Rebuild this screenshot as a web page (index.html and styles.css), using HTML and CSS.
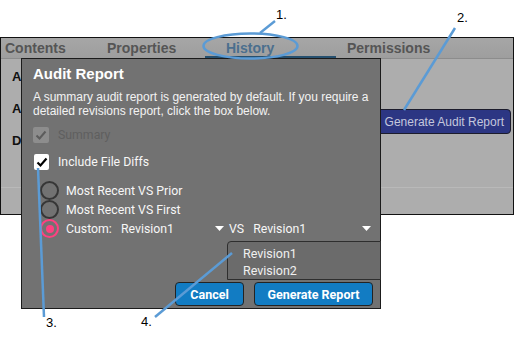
FILE: index.html
```html
<!DOCTYPE html>
<html lang="en">
<head>
    <meta charset="UTF-8">
    <title>Audit Report</title>
    <link rel="stylesheet" href="styles.css">
</head>
<body>
    <div class="panel">
        <div class="tabs">
            <span class="tab tab-contents">Contents</span>
            <span class="tab tab-properties">Properties</span>
            <span class="tab tab-history">History</span>
            <span class="tab tab-permissions">Permissions</span>
        </div>
        <div class="panel-body">
            <div class="panel-row">
                <div class="labels">
                    <div>A</div>
                    <div>A</div>
                    <div>D</div>
                </div>
                <button class="audit-btn">Generate Audit Report</button>
            </div>
            <div class="divider"></div>
        </div>
    </div>

    <div class="dialog">
        <h2 class="dialog-title">Audit Report</h2>
        <p class="dialog-text">A summary audit report is generated by default. If you require a detailed revisions report, click the box below.</p>

        <div class="check-row disabled">
            <span class="box box-disabled">
                <svg width="16" height="16" viewBox="0 0 16 16"><path d="M3.5 8.5 L6.5 11.5 L12.5 4.5" fill="none" stroke="#5c5c5c" stroke-width="2"/></svg>
            </span>
            <span>Summary</span>
        </div>
        <div class="check-row">
            <span class="box box-checked">
                <svg width="16" height="16" viewBox="0 0 16 16"><path d="M3.5 8.5 L6.5 11.5 L12.5 4.5" fill="none" stroke="#000" stroke-width="2.2"/></svg>
            </span>
            <span>Include File Diffs</span>
        </div>

        <div class="radio-row"><span class="radio"></span><span>Most Recent VS Prior</span></div>
        <div class="radio-row"><span class="radio"></span><span>Most Recent VS First</span></div>
        <div class="radio-row">
            <span class="radio radio-on"></span>
            <span class="custom-label">Custom:</span>
            <span class="select select-a">Revision1
                <svg class="caret" width="9" height="5" viewBox="0 0 9 5"><polygon points="0,0 9,0 4.5,5" fill="#fff"/></svg>
            </span>
            <span class="vs">VS</span>
            <span class="select select-b">Revision1
                <svg class="caret" width="9" height="5" viewBox="0 0 9 5"><polygon points="0,0 9,0 4.5,5" fill="#fff"/></svg>
            </span>
        </div>

        <ul class="menu">
            <li>Revision1</li>
            <li>Revision2</li>
        </ul>

        <div class="dialog-footer">
            <button class="btn btn-cancel">Cancel</button>
            <button class="btn btn-generate">Generate Report</button>
        </div>
    </div>

    <!-- callouts -->
    <svg class="callouts" width="514" height="343" viewBox="0 0 514 343">
        <ellipse cx="250.5" cy="46" rx="47" ry="12.5" fill="none" stroke="#5b9bd5" stroke-width="2.5"/>
        <line x1="275" y1="21" x2="260" y2="33" stroke="#5b9bd5" stroke-width="2.5"/>
        <line x1="455" y1="28" x2="404" y2="110" stroke="#5b9bd5" stroke-width="2.5"/>
        <line x1="38" y1="168" x2="44" y2="317" stroke="#5b9bd5" stroke-width="2.5"/>
        <line x1="232" y1="253" x2="155" y2="317" stroke="#5b9bd5" stroke-width="2.5"/>
    </svg>
    <span class="num num-1">1.</span>
    <span class="num num-2">2.</span>
    <span class="num num-3">3.</span>
    <span class="num num-4">4.</span>
</body>
</html>
```

FILE: styles.css
```css
body {
    margin: 0;
    width: 514px;
    height: 343px;
    position: relative;
    background: #fff;
    font-family: "Liberation Sans", Arial, sans-serif;
    overflow: hidden;
}

.panel {
    margin-top: 37px;
    width: 514px;
    height: 178px;
    box-sizing: border-box;
    border: 1px solid #111;
    background: #adadad;
}

.tabs {
    display: flex;
    height: 20px;
    line-height: 20px;
    border-bottom: 1px solid #8c8c8c;
    background: linear-gradient(#a6a6a6, #9e9e9e);
    font-size: 14px;
    font-weight: bold;
    color: #555;
}

.tab { display: block; box-sizing: border-box; }
.tab-contents { width: 106px; padding-left: 4px; }
.tab-properties { width: 98px; }
.tab-history {
    width: 131px;
    padding-left: 21px;
    color: #4b6f8e;
    box-shadow: inset 0 -2px 0 #26506f;
}
.tab-permissions { padding-left: 11px; }

.panel-body { padding-top: 2px; }

.panel-row {
    display: flex;
    justify-content: space-between;
    align-items: flex-start;
}

.labels {
    padding-left: 11px;
    font-size: 13px;
    font-weight: bold;
    line-height: 32px;
    color: #111;
}

.audit-btn {
    margin: 48px 2px 0 0;
    height: 25px;
    padding: 0 6px 0 10px;
    border: 1px solid #1c1c2c;
    border-radius: 4px;
    background: #2c3683;
    color: #c4c7dd;
    font-family: "Liberation Sans", Arial, sans-serif;
    font-size: 12px;
}

.divider {
    margin-top: 30px;
    border-top: 1px solid #b9b9b9;
}

/* dialog */
.dialog {
    position: absolute;
    left: 21px;
    top: 58px;
    width: 360px;
    height: 251px;
    box-sizing: border-box;
    padding: 6px 7px 2px 11px;
    border: 1px solid #1b1b1b;
    background: #727272;
    color: #fff;
    display: flex;
    flex-direction: column;
}

.dialog-title {
    margin: 0;
    font-size: 15px;
    line-height: 18px;
    font-weight: bold;
}

.dialog-text {
    margin: 7px 0 0;
    font-size: 12px;
    line-height: 14px;
    color: #f2f2f2;
}

.check-row, .radio-row {
    display: flex;
    align-items: center;
    font-family: Roboto, "Noto Sans", sans-serif;
    font-size: 12.3px;
    color: #f7f7f7;
}

.check-row { height: 16px; gap: 9px; }
.check-row.disabled { margin-top: 9px; color: #5f5f5f; }
.check-row + .check-row { margin-top: 11px; }

.box {
    width: 16px;
    height: 16px;
    border-radius: 2px;
    display: block;
}
.box svg { display: block; }
.box-disabled { background: #8d8d8d; }
.box-checked { background: #fff; margin-left: 1px; width: 15px; }

.radio-row { height: 19px; gap: 7px; }
.check-row + .radio-row { margin-top: 11px; }

.radio {
    width: 19px;
    height: 19px;
    margin-left: 7px;
    box-sizing: border-box;
    border: 2.5px solid #363636;
    border-radius: 50%;
    position: relative;
}

.radio-on { border-color: #ff4081; border-width: 2px; }
.radio-on::after {
    content: "";
    position: absolute;
    left: 3.5px;
    top: 3.5px;
    width: 8px;
    height: 8px;
    border-radius: 50%;
    background: #ff4081;
}

.custom-label { width: 48px; }

.select {
    display: flex;
    align-items: center;
    justify-content: space-between;
}
.select-a { width: 103px; }
.select-b { width: 118px; }
.vs { margin: 0 2px 0 -2px; }

.menu {
    position: absolute;
    left: 205px;
    top: 182px;
    right: -1px;
    height: 39px;
    box-sizing: border-box;
    margin: 0;
    padding: 3px 0 0 15px;
    list-style: none;
    border: 1px solid #2e2e2e;
    border-radius: 4px 0 0 0;
    background: #6b6b6b;
    font-family: Roboto, "Noto Sans", sans-serif;
    font-size: 12.5px;
    line-height: 17px;
    color: #f0f0f0;
}

.dialog-footer {
    margin-top: auto;
    display: flex;
    justify-content: flex-end;
    gap: 10px;
}

.btn {
    height: 24px;
    border: 1px solid #232323;
    border-radius: 4px;
    background: #127cc3;
    color: #fff;
    font-family: Roboto, "Noto Sans", sans-serif;
    font-size: 12.5px;
    font-weight: bold;
    padding: 0;
}
.btn-cancel { width: 69px; }
.btn-generate { width: 119px; }

/* callouts */
.callouts {
    position: absolute;
    left: 0;
    top: 0;
}

.num {
    position: absolute;
    font-family: "Liberation Sans", Arial, sans-serif;
    font-size: 13px;
    line-height: 13px;
    color: #000;
}
.num-1 { left: 276px; top: 8px; }
.num-2 { left: 457px; top: 11px; }
.num-3 { left: 46px; top: 316px; }
.num-4 { left: 141px; top: 315px; }
```
